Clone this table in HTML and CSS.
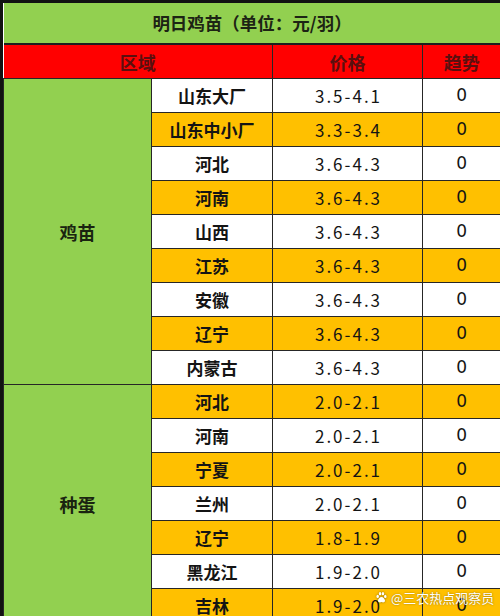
FILE: index.html
```html
<!DOCTYPE html>
<html lang="zh">
<head>
<meta charset="utf-8">
<title>明日鸡苗</title>
<link rel="stylesheet" href="styles.css">
</head>
<body>
<div class="sheet">
  <table class="grid">
    <colgroup>
      <col class="c-group">
      <col class="c-region">
      <col class="c-price">
      <col class="c-trend">
    </colgroup>
    <tr class="title-row"><td colspan="4">明日鸡苗（单位：元/羽）</td></tr>
    <tr class="head-row">
      <td colspan="2">区域</td>
      <td>价格</td>
      <td>趋势</td>
    </tr>
    <tr class="w">
      <td class="group" rowspan="9">鸡苗</td>
      <td class="region">山东大厂</td><td class="price">3.5-4.1</td><td class="trend">0</td>
    </tr>
    <tr class="o"><td class="region">山东中小厂</td><td class="price">3.3-3.4</td><td class="trend">0</td></tr>
    <tr class="w"><td class="region">河北</td><td class="price">3.6-4.3</td><td class="trend">0</td></tr>
    <tr class="o"><td class="region">河南</td><td class="price">3.6-4.3</td><td class="trend">0</td></tr>
    <tr class="w"><td class="region">山西</td><td class="price">3.6-4.3</td><td class="trend">0</td></tr>
    <tr class="o"><td class="region">江苏</td><td class="price">3.6-4.3</td><td class="trend">0</td></tr>
    <tr class="w"><td class="region">安徽</td><td class="price">3.6-4.3</td><td class="trend">0</td></tr>
    <tr class="o"><td class="region">辽宁</td><td class="price">3.6-4.3</td><td class="trend">0</td></tr>
    <tr class="w"><td class="region">内蒙古</td><td class="price">3.6-4.3</td><td class="trend">0</td></tr>
    <tr class="o">
      <td class="group" rowspan="7">种蛋</td>
      <td class="region">河北</td><td class="price">2.0-2.1</td><td class="trend">0</td>
    </tr>
    <tr class="w"><td class="region">河南</td><td class="price">2.0-2.1</td><td class="trend">0</td></tr>
    <tr class="o"><td class="region">宁夏</td><td class="price">2.0-2.1</td><td class="trend">0</td></tr>
    <tr class="w"><td class="region">兰州</td><td class="price">2.0-2.1</td><td class="trend">0</td></tr>
    <tr class="o"><td class="region">辽宁</td><td class="price">1.8-1.9</td><td class="trend">0</td></tr>
    <tr class="w"><td class="region">黑龙江</td><td class="price">1.9-2.0</td><td class="trend">0</td></tr>
    <tr class="o"><td class="region">吉林</td><td class="price">1.9-2.0</td><td class="trend">0</td></tr>
  </table>
  <div class="watermark">
    <svg class="paw" viewBox="0 0 24 24" width="13" height="13">
      <ellipse cx="5" cy="10" rx="2.3" ry="2.9"/>
      <ellipse cx="9.3" cy="5" rx="2.3" ry="3"/>
      <ellipse cx="14.7" cy="5" rx="2.3" ry="3"/>
      <ellipse cx="19" cy="10" rx="2.3" ry="2.9"/>
      <path d="M12 11c-3 0-6.5 4-6.5 7 0 2.4 2 3 3.5 3 1.3 0 2-.6 3-.6s1.7.6 3 .6c1.5 0 3.5-.6 3.5-3 0-3-3.5-7-6.5-7z"/>
    </svg>
    <span class="wm-text">@三农热点观察员</span>
  </div>
</div>
</body>
</html>
```

FILE: styles.css
```css
html, body {
  margin: 0;
  padding: 0;
  background: #ffffff;
}

body {
  width: 500px;
  height: 616px;
  overflow: hidden;
  font-family: "Noto Sans CJK SC", "Noto Sans", sans-serif;
  color: #141414;
}

.sheet {
  position: relative;
  width: 497px;
  border-top: 3px solid #121212;
  border-left: 3px solid #121212;
}

.grid {
  width: 497px;
  border-collapse: collapse;
  table-layout: fixed;
}

.c-group { width: 148px; }
.c-region { width: 121px; }
.c-price { width: 150px; }
.c-trend { width: 78px; }

.grid td {
  padding: 0;
  border: 1px solid #262626;
  text-align: center;
  vertical-align: middle;
  line-height: 1;
}

.title-row td {
  height: 40px;
  border-top: none;
  border-left: none;
  border-right: none;
  border-bottom: 2px solid #1e1e1e;
  background: #92d050;
  font-size: 17.5px;
  font-weight: 700;
  color: #1d2414;
}

.head-row td {
  height: 33px;
  background: #ff0000;
  font-size: 18px;
  font-weight: 700;
  color: #5a0f0f;
}

.head-row td:first-child,
.group {
  border-left: none;
}

.grid tr > td:last-child {
  border-right: none;
}

.w td, .o td {
  height: 33px;
}

.w td { background: #ffffff; }
.o td { background: #ffc000; }

.grid td.group {
  background: #92d050;
  font-size: 18px;
  font-weight: 700;
  color: #1a2410;
}

.region {
  font-size: 17px;
  font-weight: 700;
}

.price {
  font-size: 17px;
  letter-spacing: 2px;
  text-indent: 2px;
  font-family: "Noto Sans CJK SC", "DejaVu Sans", sans-serif;
}

.trend {
  font-size: 17px;
  font-family: "DejaVu Sans", sans-serif;
}

.watermark {
  position: absolute;
  left: 372px;
  top: 588px;
  display: flex;
  align-items: center;
  gap: 3px;
  white-space: nowrap;
  color: #ffffff;
  font-size: 13px;
  line-height: 1;
  text-shadow: 0 0 2px rgba(0, 0, 0, 0.45);
}

.wm-text {
  white-space: nowrap;
}

.paw {
  flex: none;
  fill: #ffffff;
  filter: drop-shadow(0 0 1px rgba(0, 0, 0, 0.45));
}
```
